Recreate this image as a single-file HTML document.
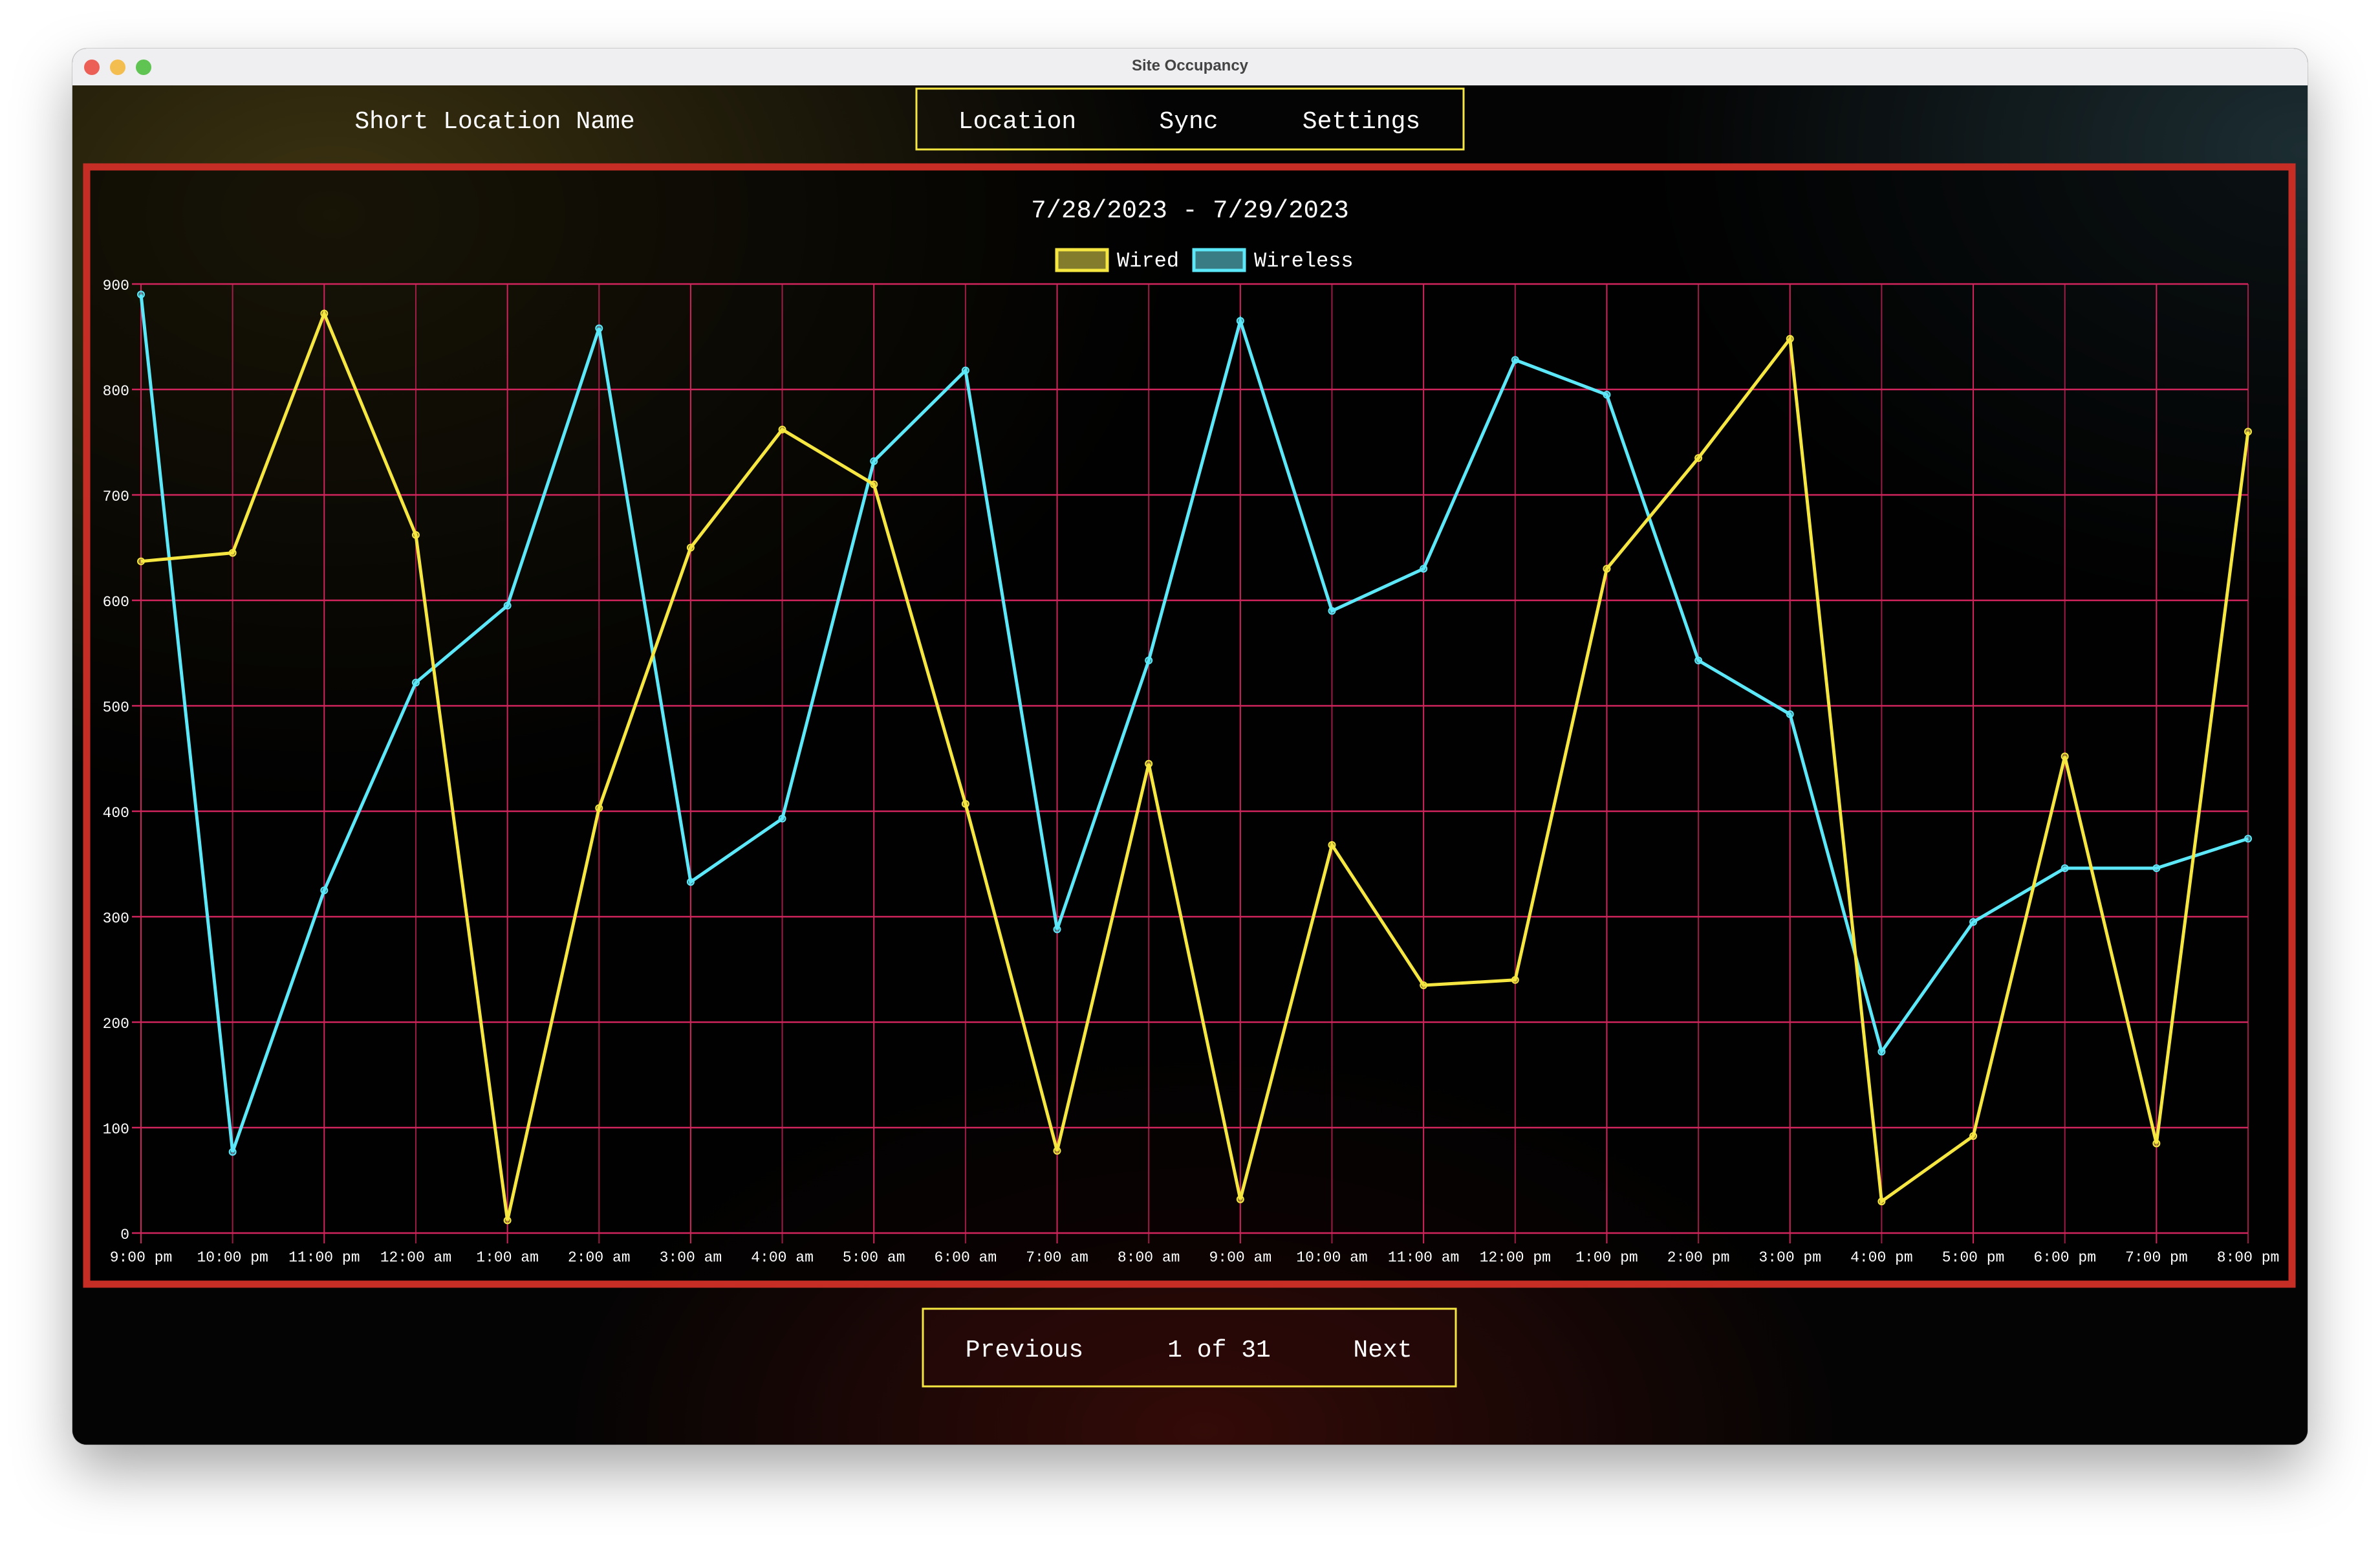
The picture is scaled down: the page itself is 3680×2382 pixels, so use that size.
<!DOCTYPE html>
<html><head><meta charset="utf-8"><style>
html,body{margin:0;padding:0;width:3680px;height:2382px;background:#fff;overflow:hidden;font-family:"Liberation Mono",monospace;}
.win{position:absolute;left:112px;top:75px;width:3456px;height:2158px;border-radius:22px;overflow:hidden;box-shadow:0 40px 90px rgba(0,0,0,0.35),0 0 0 1px rgba(0,0,0,0.15);background:#000;}
.tb{position:absolute;left:0;top:0;width:100%;height:57px;background:#efeef1;border-bottom:1px solid #c8c8c8;}
.tb .t{position:absolute;width:100%;text-align:center;top:13px;font:bold 24px "Liberation Sans",sans-serif;color:#444;}
.dot{position:absolute;top:17px;width:24px;height:24px;border-radius:50%;}
.bg{position:absolute;left:0;top:57px;width:100%;height:2101px;
background:
radial-gradient(ellipse 1300px 900px at 400px 200px,rgba(66,56,18,0.9),rgba(0,0,0,0) 100%),
radial-gradient(ellipse 1000px 700px at 3450px 100px,rgba(32,52,58,0.85),rgba(0,0,0,0) 100%),
radial-gradient(ellipse 1000px 600px at 1750px 2080px,rgba(60,12,8,0.85),rgba(0,0,0,0) 100%),
#040404;}
</style></head><body>
<div class="win">
<div class="tb"><div class="dot" style="left:18px;background:#ec5f57"></div><div class="dot" style="left:58px;background:#f4bd4f"></div><div class="dot" style="left:98px;background:#5fc452"></div><div class="t">Site Occupancy</div></div>
<div class="bg"></div>
</div>
<svg width="3680" height="2382" style="position:absolute;left:0;top:0" id="s">
<text x="765" y="198" fill="#fff" font-family="Liberation Mono" font-size="38" text-anchor="middle">Short Location Name</text>
<rect x="1417" y="137" width="846" height="94" fill="none" stroke="#f5e642" stroke-width="3"/>
<text x="1573" y="198" fill="#fff" font-family="Liberation Mono" font-size="38" text-anchor="middle">Location</text>
<text x="1838" y="198" fill="#fff" font-family="Liberation Mono" font-size="38" text-anchor="middle">Sync</text>
<text x="2105" y="198" fill="#fff" font-family="Liberation Mono" font-size="38" text-anchor="middle">Settings</text>
<rect x="134" y="258" width="3410" height="1727" fill="rgba(0,0,0,0.6)" stroke="#c62d25" stroke-width="11"/>
<text x="1840" y="336" fill="#fff" font-family="Liberation Mono" font-size="39" text-anchor="middle">7/28/2023 - 7/29/2023</text>
<rect x="1634" y="386" width="78" height="32" fill="#827c2c" stroke="#f5e642" stroke-width="5"/>
<text x="1727" y="412" fill="#fff" font-family="Liberation Mono" font-size="32">Wired</text>
<rect x="1846" y="386" width="78" height="32" fill="#3a7c83" stroke="#5ce8f8" stroke-width="5"/>
<text x="1939" y="412" fill="#fff" font-family="Liberation Mono" font-size="32">Wireless</text>
<g id="grid"></g>
<g id="lines"></g>
<rect x="1427" y="2023" width="824" height="120" fill="rgba(40,8,8,0.5)" stroke="#f5e642" stroke-width="3"/>
<text x="1584" y="2097" fill="#fff" font-family="Liberation Mono" font-size="38" text-anchor="middle">Previous</text>
<text x="1885" y="2097" fill="#fff" font-family="Liberation Mono" font-size="38" text-anchor="middle">1 of 31</text>
<text x="2138" y="2097" fill="#fff" font-family="Liberation Mono" font-size="38" text-anchor="middle">Next</text>
</svg>
<script>
var NS="http://www.w3.org/2000/svg";
function el(p,t,a,txt){var e=document.createElementNS(NS,t);for(var k in a)e.setAttribute(k,a[k]);if(txt!=null)e.textContent=txt;p.appendChild(e);return e;}
var g=document.getElementById('grid'),L=document.getElementById('lines');
var x0=218,x1=3476,y0=1906,y9=439,dx=(x1-x0)/23,dy=(y0-y9)/900;
var GC="#d0245c";
for(var v=0;v<=900;v+=100){var y=y0-v*dy;el(g,'line',{x1:x0-14,x2:x1,y1:y,y2:y,stroke:GC,'stroke-width':2.5});
el(g,'text',{x:200,y:y+9,fill:'#fff','font-family':'Liberation Mono','font-size':23,'text-anchor':'end'},String(v));}
var labs=["9:00 pm","10:00 pm","11:00 pm","12:00 am","1:00 am","2:00 am","3:00 am","4:00 am","5:00 am","6:00 am","7:00 am","8:00 am","9:00 am","10:00 am","11:00 am","12:00 pm","1:00 pm","2:00 pm","3:00 pm","4:00 pm","5:00 pm","6:00 pm","7:00 pm","8:00 pm"];
for(var i=0;i<24;i++){var x=x0+i*dx;el(g,'line',{x1:x,x2:x,y1:y9,y2:y0+16,stroke:GC,'stroke-width':2,opacity:(i%2?0.75:1)});
el(g,'text',{x:x,y:1950,fill:'#fff','font-family':'Liberation Mono','font-size':23,'text-anchor':'middle'},labs[i]);}
var wired=[637,645,872,662,12,403,650,762,710,407,78,445,32,368,235,240,630,735,848,30,92,452,85,760];
var wl=[890,77,325,522,595,858,333,393,732,818,288,543,865,590,630,828,795,543,492,172,295,346,346,374];
function draw(d,c){var pts=d.map(function(v,i){return (x0+i*dx)+","+(y0-v*dy)}).join(" ");
el(L,'polyline',{points:pts,fill:'none',stroke:c,'stroke-width':5,'stroke-linejoin':'miter'});
d.forEach(function(v,i){el(L,'circle',{cx:x0+i*dx,cy:y0-v*dy,r:5,fill:c,stroke:c,'stroke-width':2,'fill-opacity':0.5});});}
draw(wl,"#5ce8f8");draw(wired,"#f5e642");
</script>
</body></html>
